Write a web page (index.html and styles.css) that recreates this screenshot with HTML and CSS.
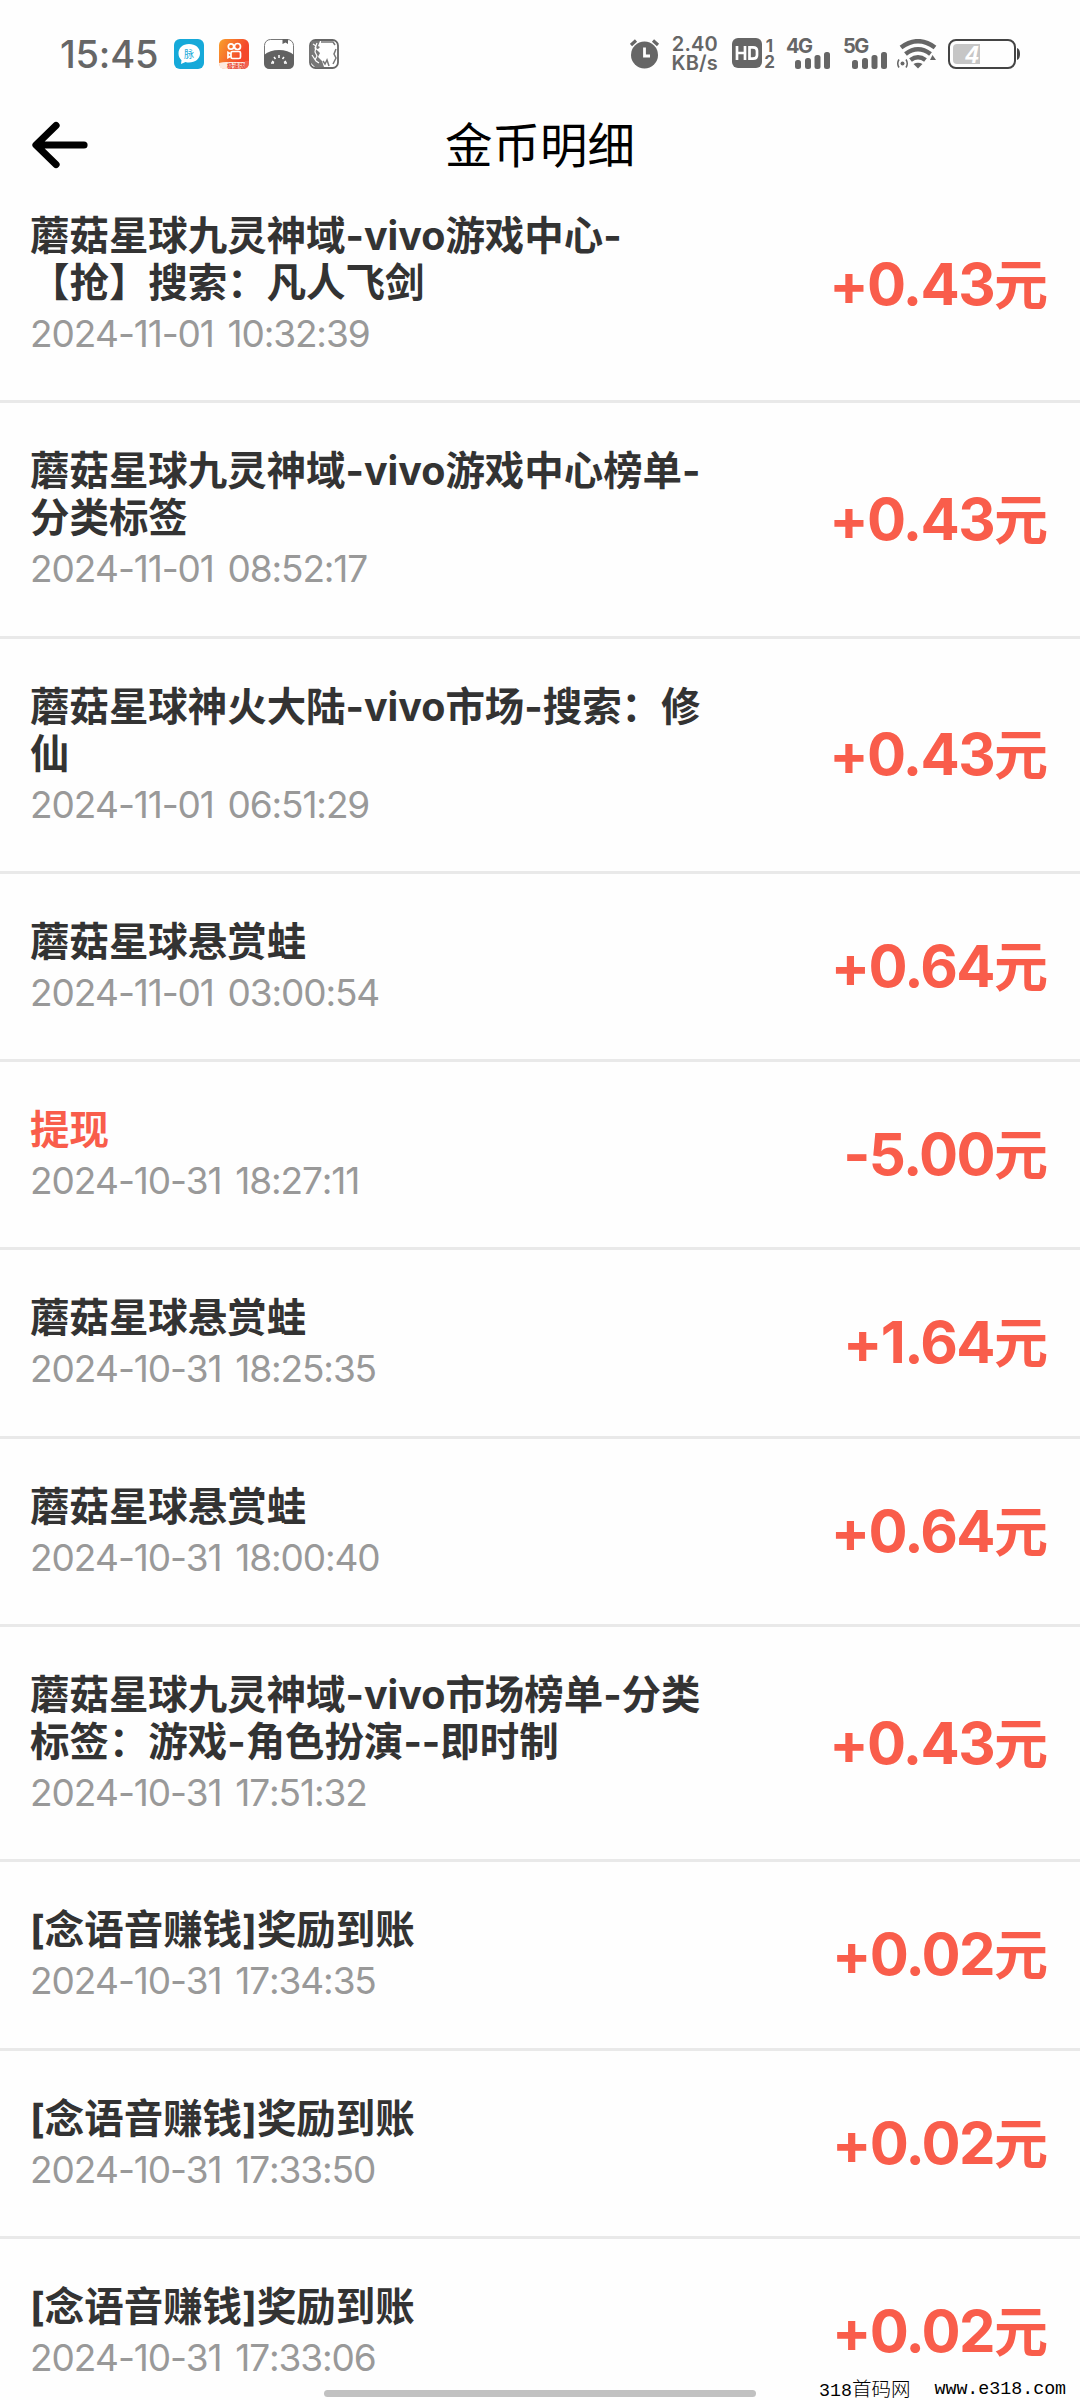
FILE: index.html
```html
<!DOCTYPE html>
<html lang="zh-CN">
<head>
<meta charset="utf-8">
<title>金币明细</title>
<link rel="stylesheet" href="styles.css">
</head>
<body>
<div class="screen">
  <header class="status">
    <span class="clock">15:45</span>
    <div class="apps">
      <svg width="30" height="30" viewBox="0 0 30 30"><rect width="30" height="30" rx="6" fill="#16a9d9"/><path d="M15 5C8.500 5 4.500 9 4.500 14.500c0 2.800 1.200 5 3 6.800L7 25l4.500-2c1.200.4 2.300.5 3.500.5 6.500 0 11-3.800 11-9.200S21.500 5 15 5Z" fill="#fff"/><text x="10" y="18.500" class="app-char">脉</text></svg>
      <svg width="30" height="30" viewBox="0 0 30 30"><defs><linearGradient id="ks" x1="0" y1="0" x2="1" y2=".5"><stop offset="0" stop-color="#f9a12b"/><stop offset=".8" stop-color="#f4492c"/></linearGradient></defs><rect width="30" height="30" rx="6" fill="url(#ks)"/><g fill="none" stroke="#fff" stroke-width="1.700"><circle cx="12" cy="7.500" r="2.700"/><circle cx="18.500" cy="7.500" r="3"/><rect x="12" y="12.500" width="9.500" height="7" rx="1.500"/><path d="m12 15-3-1.500v5l3-1.500"/></g><path d="M0 24q4-1 7-1h23v1q0 6-6 6H6Q0 30 0 24Z" fill="#fdeadf"/><path d="M26 22h4v2q0 5-5 6Z" fill="#f4604c"/><text x="8" y="29" class="app-label">极速版</text></svg>
      <svg width="30" height="30" viewBox="0 0 30 30"><rect x=".5" y=".5" width="29" height="29" rx="6" fill="#fff" stroke="#777"/><path d="M0 16Q6 11 15 11t15 5V24q0 6-6 6H6q-6 0-6-6Z" fill="#626262"/><path d="M18.500 0h5.500v5l-2.500-1.500-3 1.500Z" fill="#626262"/><g stroke="#fff" stroke-width="1.500"><path d="M15 16v3M10 18l1.500 2M20 18l-1.500 2M7 24h3M20 24h3M8 22l2 1.500M22 22l-2 1.500"/></g></svg>
      <svg width="30" height="30" viewBox="0 0 30 30"><rect x="1" y="1" width="28" height="28" rx="5.500" fill="#fff" stroke="#666" stroke-width="1.800"/><path d="M2 2l9 0-2 5 2 1-3 3 3 3-2 4 4 4 2 6-8 1-5-5Z" fill="#777"/><path d="M4 5l3 2-1 6 2 4-2 4M8 4 6 9l3 2M3 16l4 6 3 2" fill="none" stroke="#fff" stroke-width="1.200"/><path d="M12 3h12l2 3M14 22l2 3 2-4 2 6M27 10l-2 5 2 4-3 6" fill="none" stroke="#777" stroke-width="1.500"/></svg>
    </div>
    <div class="signals">
      <svg width="30" height="30" viewBox="0 0 30 30"><circle cx="14.500" cy="16" r="13.500" fill="#666"/><path d="m1 6 5-4.500M23 1.500 28 6" stroke="#666" stroke-width="3.200"/><path d="M14.500 8.500V17H20" fill="none" stroke="#fff" stroke-width="2.800"/></svg>
      <div class="speed"><span>2.40</span><span>KB/s</span></div>
      <div class="hd"><svg width="30" height="30" viewBox="0 0 30 30"><rect width="30" height="30" rx="6" fill="#666"/><path d="M5 8v14M13 8v14M5 15h8M17.500 9.300h3.500q4 0 4 3.500v4.400q0 3.500-4 3.500h-3.500Z" fill="none" stroke="#fff" stroke-width="2.700"/></svg><div class="sims"><span>1</span><span>2</span></div></div>
      <div class="net"><span>4G</span><svg width="36" height="17" viewBox="0 0 36 17" fill="#666"><rect y="8" width="6" height="9" rx="2.500"/><rect x="10" y="6" width="6" height="11" rx="2.500"/><rect x="19.500" y="3" width="6" height="14" rx="2.500"/><rect x="29" width="6" height="17" rx="2.500"/></svg></div>
      <div class="net net-5g"><span>5G</span><svg width="36" height="17" viewBox="0 0 36 17" fill="#666"><rect y="8" width="6" height="9" rx="2.500"/><rect x="10" y="6" width="6" height="11" rx="2.500"/><rect x="19.500" y="3" width="6" height="14" rx="2.500"/><rect x="29" width="6" height="17" rx="2.500"/></svg></div>
      <svg class="wifi" width="40" height="30" viewBox="0 0 40 30"><g fill="none" stroke="#666" stroke-width="4.600"><path d="M4 8.500Q21 -4 38 8.500"/><path d="M8.500 15Q21 5.500 33.500 15"/><path d="M13.500 21Q21 15.500 28.500 21"/></g><path d="M16.500 25q4.500-2.500 9 0L21 29.500Z" fill="#666"/><circle cx="5.500" cy="24.500" r="2" fill="#666"/><path d="M2 20.500q-2.500 4 0 8M9 20.500q2.500 4 0 8" fill="none" stroke="#666" stroke-width="1.500"/><path d="m35.500 16 3.500 5h-6Z" fill="#666"/></svg>
      <svg class="battery" width="72" height="30" viewBox="0 0 72 30"><rect x="1" y="1" width="66" height="28" rx="7" fill="none" stroke="#444" stroke-width="2"/><path d="M69 9q3 1 3 6t-3 6Z" fill="#444"/><path d="M9 5h23v20H9q-4 0-4-4V9q0-4 4-4Z" fill="#c6c6c6"/><text x="17.500" y="23.500" class="level">4</text></svg>
    </div>
  </header>
  <nav class="bar">
    <svg width="56" height="48" viewBox="0 0 56 48"><path d="M24 4.500 4 24l20 19.500M5 24h47" fill="none" stroke="#000" stroke-width="7.200" stroke-linecap="round" stroke-linejoin="round"/></svg>
    <h1>金币明细</h1>
  </nav>
  <main class="list">
    <section class="row"><div class="info"><h2>蘑菇星球九灵神域-vivo游戏中心-<br>【抢】搜索：凡人飞剑</h2><time>2024-11-01 10:32:39</time></div><p class="amount">+0.43<span>元</span></p></section>
    <section class="row"><div class="info"><h2>蘑菇星球九灵神域-vivo游戏中心榜单-<br>分类标签</h2><time>2024-11-01 08:52:17</time></div><p class="amount">+0.43<span>元</span></p></section>
    <section class="row"><div class="info"><h2>蘑菇星球神火大陆-vivo市场-搜索：修<br>仙</h2><time>2024-11-01 06:51:29</time></div><p class="amount">+0.43<span>元</span></p></section>
    <section class="row"><div class="info"><h2>蘑菇星球悬赏蛙</h2><time>2024-11-01 03:00:54</time></div><p class="amount">+0.64<span>元</span></p></section>
    <section class="row"><div class="info"><h2 class="out">提现</h2><time>2024-10-31 18:27:11</time></div><p class="amount">-5.00<span>元</span></p></section>
    <section class="row"><div class="info"><h2>蘑菇星球悬赏蛙</h2><time>2024-10-31 18:25:35</time></div><p class="amount">+1.64<span>元</span></p></section>
    <section class="row"><div class="info"><h2>蘑菇星球悬赏蛙</h2><time>2024-10-31 18:00:40</time></div><p class="amount">+0.64<span>元</span></p></section>
    <section class="row"><div class="info"><h2>蘑菇星球九灵神域-vivo市场榜单-分类<br>标签：游戏-角色扮演--即时制</h2><time>2024-10-31 17:51:32</time></div><p class="amount">+0.43<span>元</span></p></section>
    <section class="row"><div class="info"><h2>[念语音赚钱]奖励到账</h2><time>2024-10-31 17:34:35</time></div><p class="amount">+0.02<span>元</span></p></section>
    <section class="row"><div class="info"><h2>[念语音赚钱]奖励到账</h2><time>2024-10-31 17:33:50</time></div><p class="amount">+0.02<span>元</span></p></section>
    <section class="row"><div class="info"><h2>[念语音赚钱]奖励到账</h2><time>2024-10-31 17:33:06</time></div><p class="amount">+0.02<span>元</span></p></section>
  </main>
  <div class="home"></div>
  <div class="mark"><span>318<b>首码网</b></span><span>www.e318.com</span></div>
</div>
</body>
</html>
```

FILE: styles.css
```css
* { box-sizing: border-box; }
body { margin: 0; background: #fefefe; font-family: Inter, "Noto Sans CJK SC", sans-serif; }
h1, h2, p { margin: 0; }
svg { display: block; flex: none; }
.screen { position: relative; width: 1080px; height: 2400px; overflow: hidden; }

.status { display: flex; height: 108px; padding: 0 60px 0 60px; align-items: center; color: #666; }
.clock { width: 114px; font-size: 38px; font-weight: 500; letter-spacing: -0.2px; white-space: nowrap; }
.apps { display: flex; gap: 15px; }
.app-char { font: 10px "Noto Sans CJK SC", sans-serif; fill: #16a9d9; }
.app-label { font: bold 6px "Noto Sans CJK SC", sans-serif; fill: #e8402c; }
.signals { display: flex; margin-left: auto; align-items: center; }
.speed { display: flex; flex-direction: column; width: 47px; margin-left: 11px; align-items: flex-end; font-size: 20px; line-height: 19.500px; font-weight: 600; letter-spacing: 0.2px; }
.hd { display: flex; margin-left: 14px; gap: 2px; }
.sims { display: flex; flex-direction: column; width: 11px; align-items: center; font-size: 17px; line-height: 16px; font-weight: 700; }
.net { width: 45px; height: 30px; margin-left: 11px; font-size: 20px; line-height: 15px; font-weight: 700; letter-spacing: -1.500px; }
.net span { display: block; height: 13px; }
.net svg { margin-left: 9px; }
.net-5g { margin-left: 12px; }
.wifi { margin-left: 9px; }
.battery { margin-left: 11px; }
.level { font: italic bold 24px "Liberation Sans", sans-serif; fill: #fff; }

.bar { display: grid; grid-template-columns: 56px 1fr 56px; height: 73px; padding: 0 32px; align-items: center; }
.bar h1 { margin-top: -4px; font: 400 47.500px/72px "Noto Sans CJK SC", sans-serif; text-align: center; color: #000; }

.row { display: flex; justify-content: space-between; align-items: center; padding: 45px 32px 44.300px 30px; border-bottom: 3px solid #e9e9e9; }
.row:first-child { padding-top: 32px; }
.info h2 { font: 700 39.450px/47px Inter, "Noto Sans CJK SC", sans-serif; color: #333; white-space: nowrap; }
.info h2.out { color: #f95d4b; }
.info time { display: block; height: 49px; font-size: 37px; line-height: 54px; letter-spacing: -1.120px; word-spacing: 4.500px; font-kerning: none; color: #999; white-space: nowrap; }
.amount { font-size: 58px; line-height: 80px; font-weight: 700; letter-spacing: -1.600px; color: #f95d4b; white-space: nowrap; }
.amount span { font-size: 54px; letter-spacing: 0; }

.home { position: absolute; left: 324px; top: 2390px; width: 432px; height: 7px; border-radius: 4px; background: #c1c1c1; }
.mark { position: absolute; left: 819px; top: 2378px; display: flex; gap: 24px; font: 18.300px/22px "Liberation Mono", monospace; color: #000; white-space: nowrap; }
.mark span { height: 22px; }
.mark b { font: 300 19.500px/20px "Noto Sans CJK SC", sans-serif; }
```
